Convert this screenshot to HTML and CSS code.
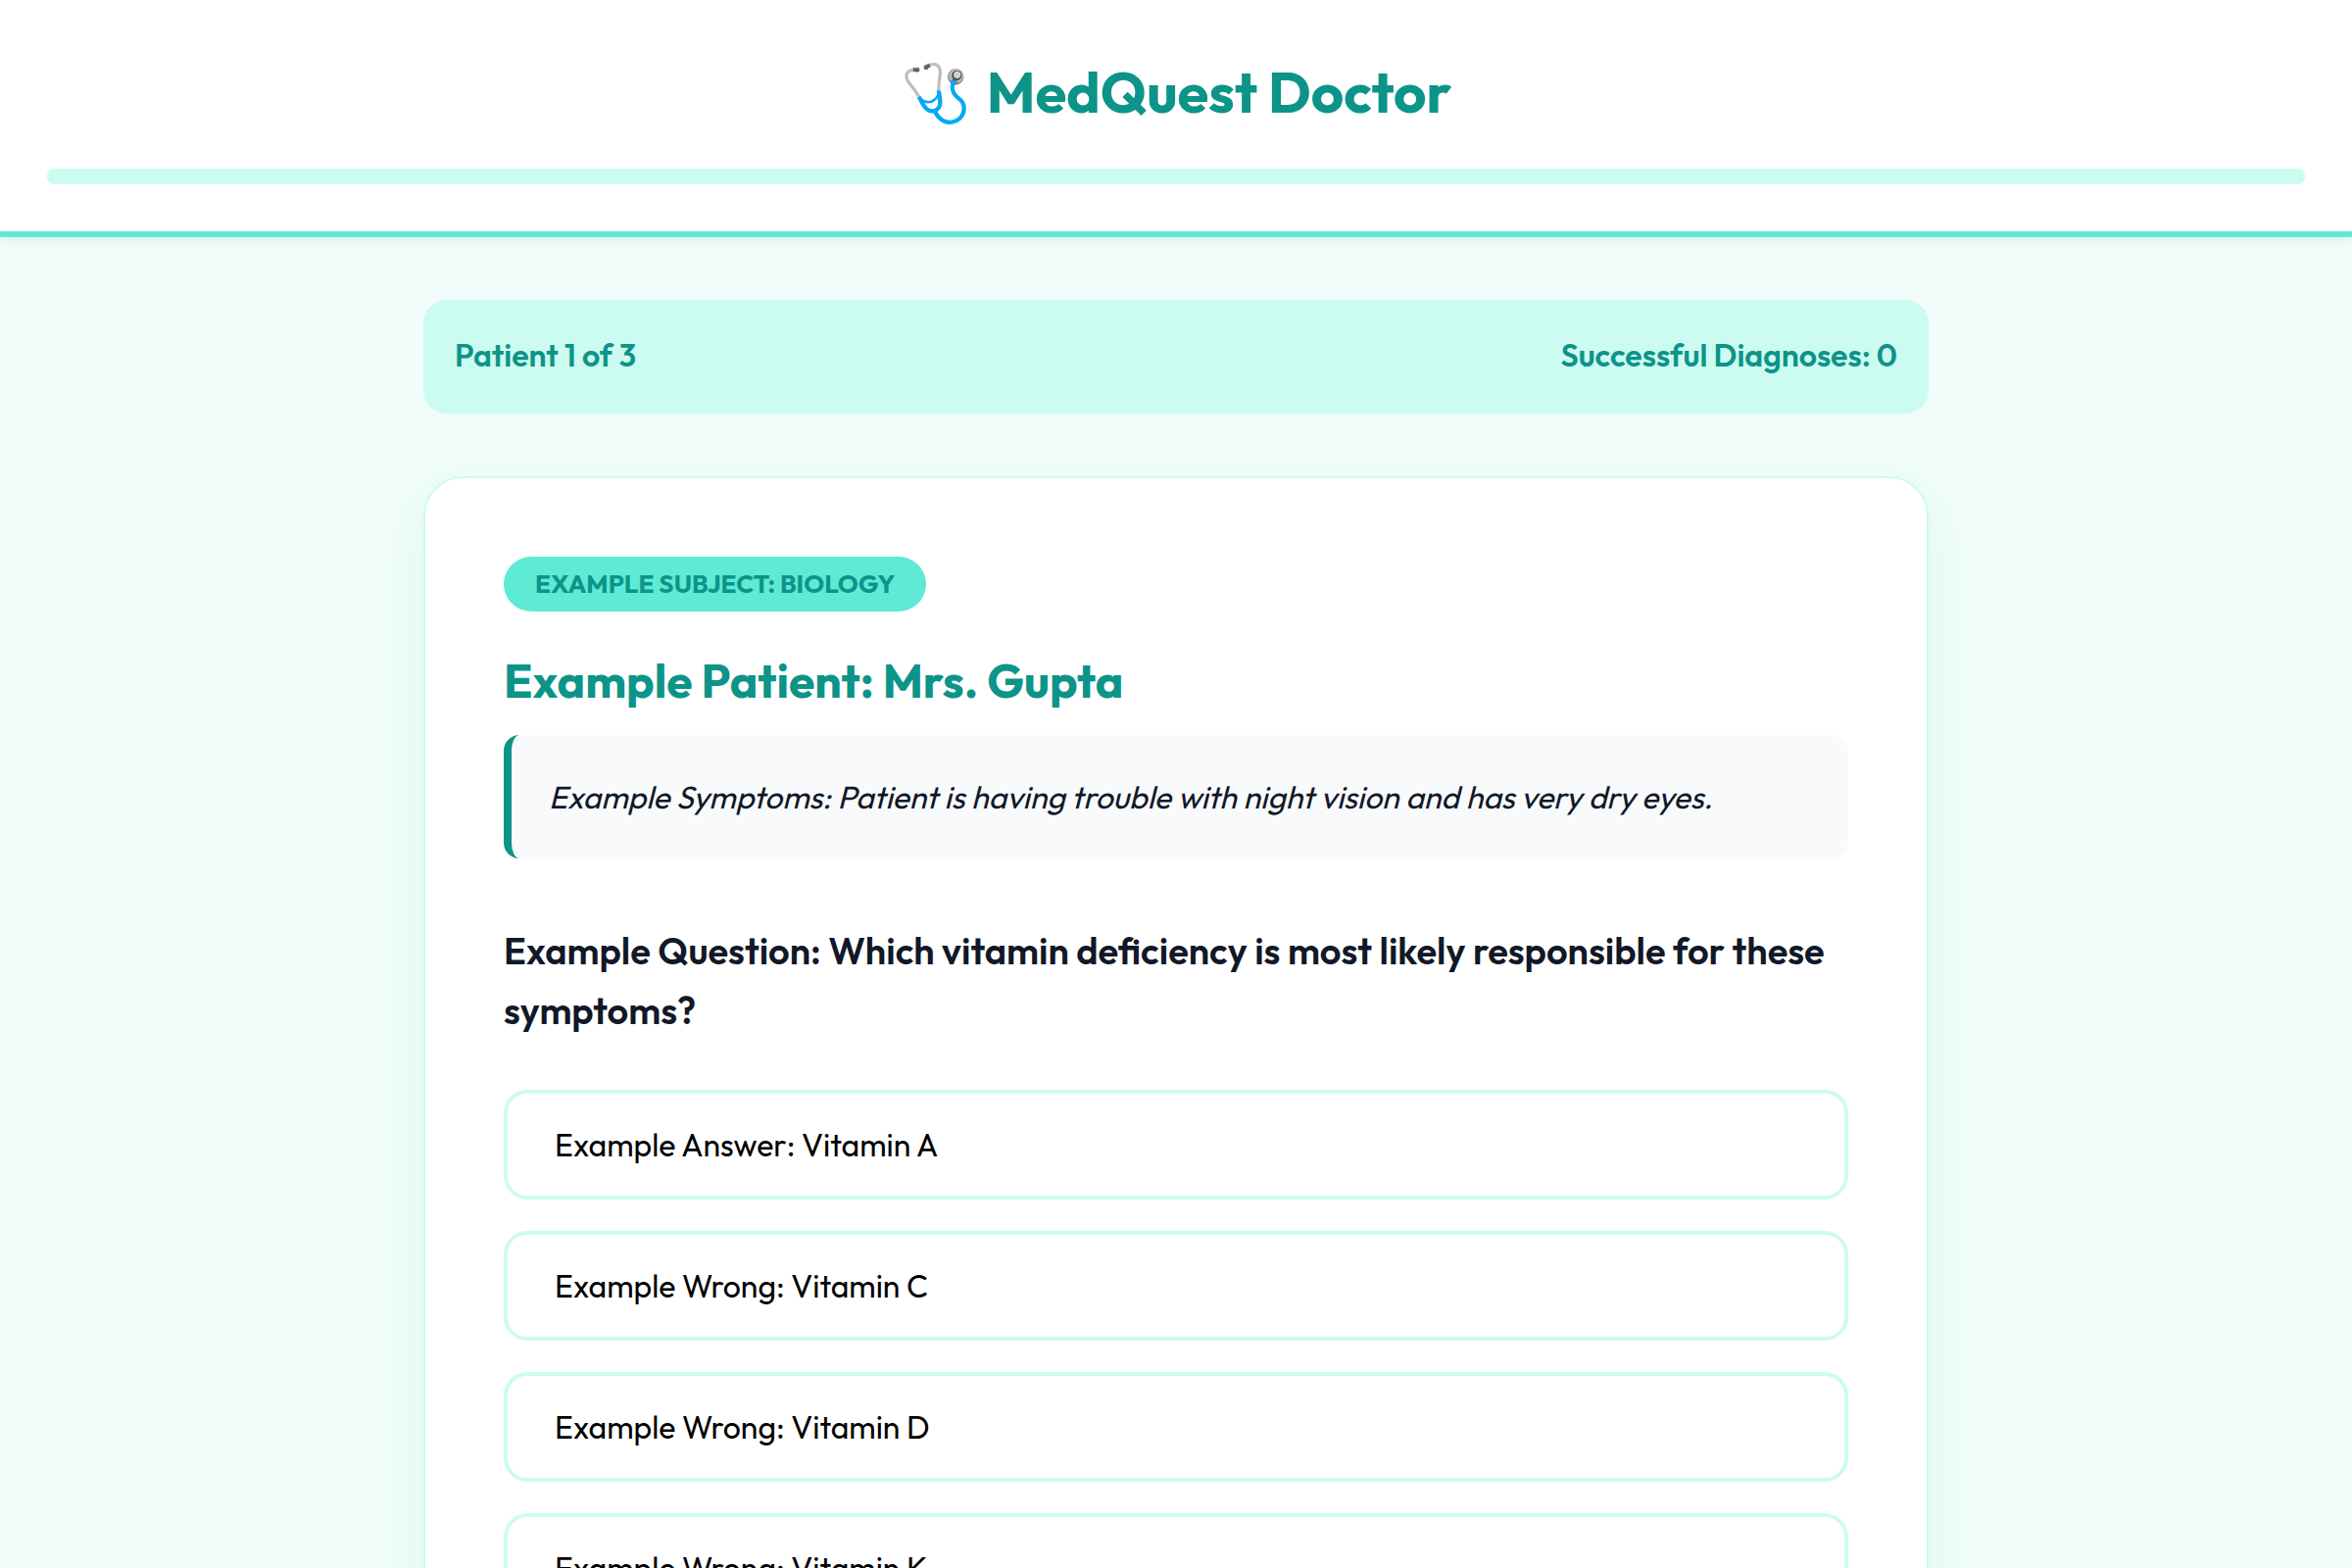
FILE: index.html
```html
<!DOCTYPE html>
<html lang="en">
<head>
  <meta charset="utf-8">
  <meta name="viewport" content="width=device-width, initial-scale=1">
  <title>MedQuest Doctor</title>
  <link rel="stylesheet" href="styles.css">
</head>
<body>
  <header class="header">
    <h1 class="title"><span aria-hidden="true">🩺</span><span>MedQuest Doctor</span></h1>
    <div class="progress" role="progressbar" aria-label="Progress" aria-valuemin="0" aria-valuemax="3" aria-valuenow="0"></div>
  </header>
  <main class="main">
    <div class="stats">
      <span>Patient 1 of 3</span>
      <span>Successful Diagnoses: 0</span>
    </div>
    <section class="card">
      <span class="badge">Example Subject: Biology</span>
      <h2 class="patient">Example Patient: Mrs. Gupta</h2>
      <p class="symptoms">Example Symptoms: Patient is having trouble with night vision and has very dry eyes.</p>
      <h3 class="question">Example Question: Which vitamin deficiency is most likely responsible for these symptoms?</h3>
      <div class="options">
        <button type="button" class="option">Example Answer: Vitamin A</button>
        <button type="button" class="option">Example Wrong: Vitamin C</button>
        <button type="button" class="option">Example Wrong: Vitamin D</button>
        <button type="button" class="option">Example Wrong: Vitamin K</button>
      </div>
    </section>
  </main>
</body>
</html>
```
FILE: styles.css
```css
:root {
  --primary: #0d9488;
  --accent: #5eead4;
  --soft: #ccfbf1;
  --page: #f0fdfa;
  --ink: #111827;
}

* {
  box-sizing: border-box;
  margin: 0;
}

html {
  scrollbar-width: none;
}

body {
  background: var(--page);
  color: var(--ink);
  font-family: Outfit, Lato, sans-serif;
  font-size: 32px;
  line-height: 50px;
}

.header {
  padding: 48px;
  background: #fff;
  border-bottom: 6px solid var(--accent);
  box-shadow: 0 8px 12px -2px rgba(0, 0, 0, 0.05);
}

.title {
  display: flex;
  justify-content: center;
  align-items: baseline;
  gap: 16px;
  margin-bottom: 32px;
  color: var(--primary);
  font-size: 58px;
  font-weight: 700;
  line-height: 92px;
}

.progress {
  height: 16px;
  border-radius: 8px;
  background: var(--soft);
}

.main {
  display: flex;
  flex-direction: column;
  gap: 64px;
  max-width: 1600px;
  margin: 0 auto;
  padding: 64px 32px;
}

.stats {
  display: flex;
  justify-content: space-between;
  padding: 32px 32px 36px;
  border-radius: 24px;
  background: var(--soft);
  color: var(--primary);
  font-weight: 600;
  line-height: 48px;
}

.card {
  display: flex;
  flex-direction: column;
  padding: 80px;
  border: 2px solid var(--soft);
  border-radius: 40px;
  background: #fff;
  box-shadow: 0 20px 50px rgba(13, 148, 136, 0.08);
}

.badge {
  align-self: flex-start;
  margin-bottom: 32px;
  padding: 8px 32px;
  border-radius: 40px;
  background: var(--accent);
  color: var(--primary);
  font-size: 26px;
  font-weight: 700;
  line-height: 40px;
  text-transform: uppercase;
}

.patient {
  margin-bottom: 18px;
  color: var(--primary);
  font-size: 48px;
  font-weight: 700;
  line-height: 76px;
}

.symptoms {
  margin-bottom: 64px;
  padding: 38px;
  border-left: 8px solid var(--primary);
  border-radius: 16px;
  background: #f8fafc;
  font-style: italic;
}

.question {
  margin-bottom: 50px;
  font-size: 38px;
  font-weight: 600;
  line-height: 61px;
}

.options {
  display: grid;
  gap: 32px;
}

.option {
  padding: 32px 48px;
  border: 4px solid var(--soft);
  border-radius: 24px;
  background: #fff;
  color: #000;
  font: inherit;
  line-height: 40px;
  text-align: left;
  cursor: pointer;
}
```
